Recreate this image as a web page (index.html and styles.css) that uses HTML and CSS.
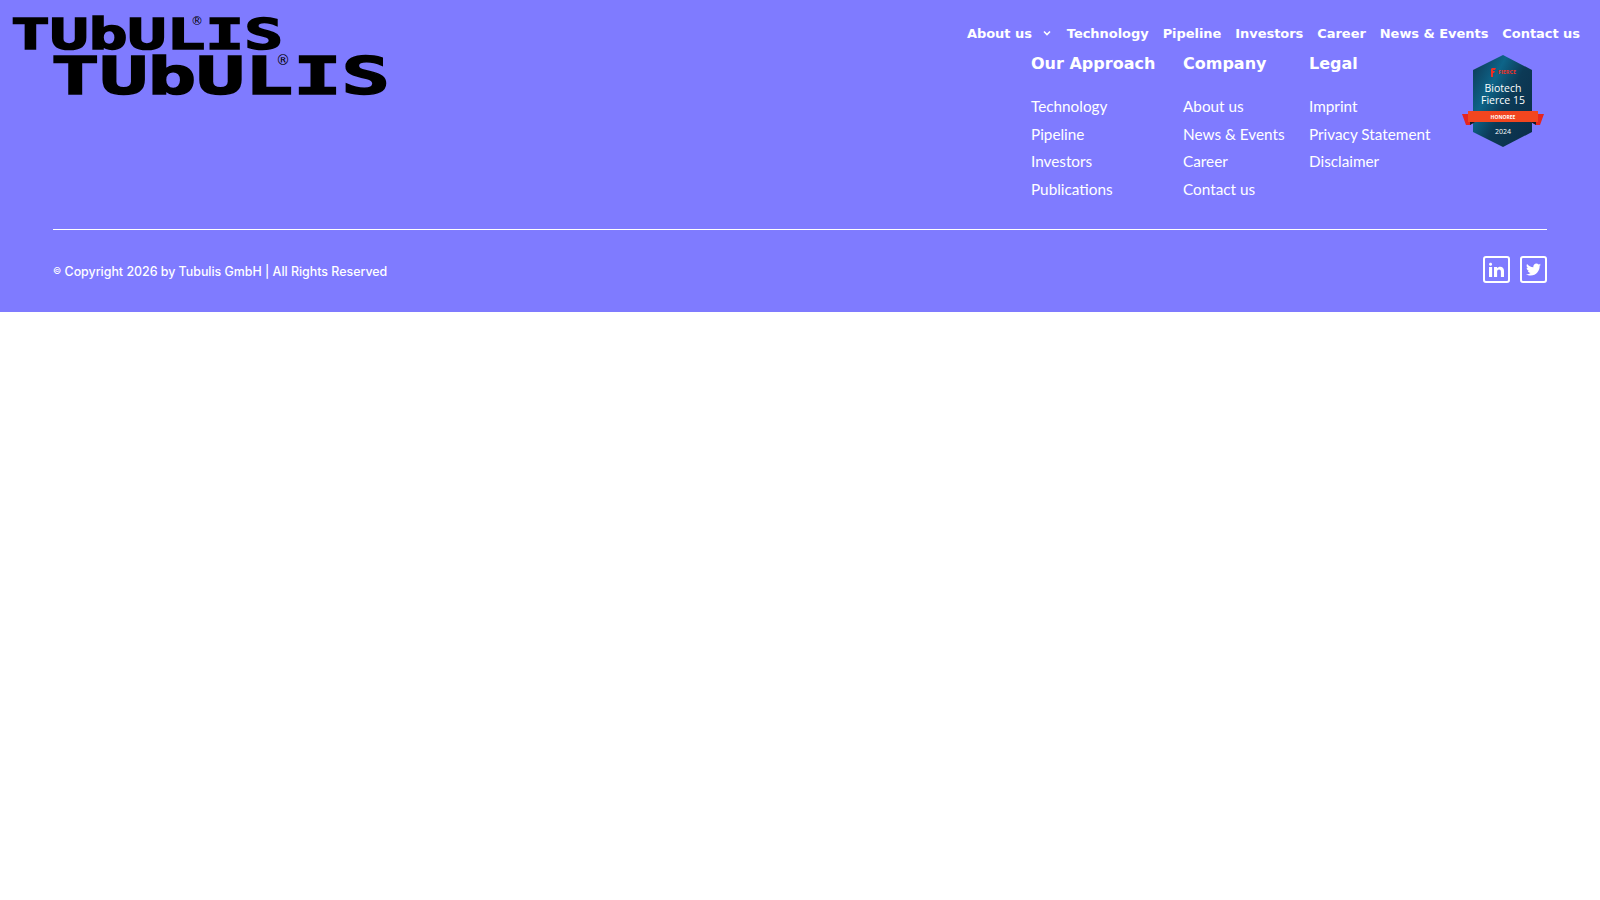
FILE: index.html
```html
<!DOCTYPE html>
<html lang="en">
<head>
  <meta charset="UTF-8">
  <meta name="viewport" content="width=device-width, initial-scale=1.0">
  <title>Tubulis</title>
  <link rel="stylesheet" href="styles.css">
</head>
<body>
  <header class="site-header">
    <a class="logo-small" href="#">
      <svg viewBox="0 0 267 33" width="267" height="33">
        <text class="logo-word" x="-2" y="32.5" font-size="42" textLength="272" lengthAdjust="spacingAndGlyphs">TUbULIS</text>
        <text class="logo-reg" x="178" y="9" font-size="12">®</text>
      </svg>
    </a>
    <nav class="main-nav">
      <a href="#" class="has-sub">About us
        <svg class="chevron" viewBox="0 0 10 10" width="10" height="10"><path d="M2 3.5 5 6.5 8 3.5" fill="none" stroke="#fff" stroke-width="1.6"/></svg>
      </a>
      <a href="#">Technology</a>
      <a href="#">Pipeline</a>
      <a href="#">Investors</a>
      <a href="#">Career</a>
      <a href="#">News &amp; Events</a>
      <a href="#">Contact us</a>
    </nav>
  </header>

  <footer class="site-footer">
    <div class="footer-top">
      <a class="logo-large" href="#">
        <svg viewBox="0 0 334 41" width="334" height="41">
          <text class="logo-word" x="-2" y="39.5" font-size="51" textLength="339" lengthAdjust="spacingAndGlyphs">TUbULIS</text>
          <text class="logo-reg" x="223" y="11" font-size="14">®</text>
        </svg>
      </a>
      <div class="footer-cols">
        <div class="footer-col">
          <h4>Our Approach</h4>
          <a href="#">Technology</a>
          <a href="#">Pipeline</a>
          <a href="#">Investors</a>
          <a href="#">Publications</a>
        </div>
        <div class="footer-col">
          <h4>Company</h4>
          <a href="#">About us</a>
          <a href="#">News &amp; Events</a>
          <a href="#">Career</a>
          <a href="#">Contact us</a>
        </div>
        <div class="footer-col">
          <h4>Legal</h4>
          <a href="#">Imprint</a>
          <a href="#">Privacy Statement</a>
          <a href="#">Disclaimer</a>
        </div>
        <svg class="badge" viewBox="0 0 84 94" width="84" height="94">
          <defs>
            <linearGradient id="badgeFill" x1="0" y1="0" x2="1" y2="0.8">
              <stop offset="0" stop-color="#0f3550"/>
              <stop offset="0.35" stop-color="#0d6488"/>
              <stop offset="0.6" stop-color="#0c3a56"/>
              <stop offset="1" stop-color="#0b2f4a"/>
            </linearGradient>
          </defs>
          <path d="M42 1 71 16V78L42 93 12 78V16Z" fill="url(#badgeFill)"/>
          <path d="M1 60H9V68H14L9 71H5Z M83 60H75V68H70L75 71H79Z" fill="#e5251f"/>
          <path d="M9 68H14L9 71Z M75 68H70L75 71Z" fill="#0a1c2a"/>
          <rect x="7" y="57" width="70" height="11" fill="#f2461f"/>
          <path d="M31 14h4l-1 2h-2v1h2l-1 2h-1v4h-2v-8Z" fill="#ee2f24"/>
          <text class="badge-fierce" x="46" y="20">FIERCE</text>
          <text class="badge-title" x="42" y="38">Biotech</text>
          <text class="badge-title" x="42" y="49.5">Fierce 15</text>
          <text class="badge-honoree" x="42" y="64.5">HONOREE</text>
          <text class="badge-year" x="42" y="80">2024</text>
        </svg>
      </div>
    </div>
    <div class="footer-bottom">
      <p class="copyright"><span class="copy-mark">©</span> Copyright 2026 by Tubulis GmbH | All Rights Reserved</p>
      <div class="social">
        <a href="#" class="social-link">
          <svg viewBox="0 0 24 24" width="15" height="15"><path fill="#fff" d="M4.98 3.5c0 1.381-1.11 2.5-2.48 2.5s-2.48-1.119-2.48-2.5c0-1.38 1.11-2.5 2.48-2.5s2.48 1.12 2.48 2.5zm.02 4.5h-5v16h5v-16zm7.982 0h-4.968v16h4.969v-8.399c0-4.67 6.029-5.052 6.029 0v8.399h4.988v-10.131c0-7.88-8.922-7.593-11.018-3.714v-2.155z"/></svg>
        </a>
        <a href="#" class="social-link">
          <svg viewBox="0 0 24 24" width="15" height="15"><path fill="#fff" d="M24 4.557c-.883.392-1.832.656-2.828.775 1.017-.609 1.798-1.574 2.165-2.724-.951.564-2.005.974-3.127 1.195-.897-.957-2.178-1.555-3.594-1.555-3.179 0-5.515 2.966-4.797 6.045-4.091-.205-7.719-2.165-10.148-5.144-1.29 2.213-.669 5.108 1.523 6.574-.806-.026-1.566-.247-2.229-.616-.054 2.281 1.581 4.415 3.949 4.89-.693.188-1.452.232-2.224.084.626 1.956 2.444 3.379 4.6 3.419-2.07 1.623-4.678 2.348-7.29 2.04 2.179 1.397 4.768 2.212 7.548 2.212 9.142 0 14.307-7.721 14.307-14.807 0-.29-.006-.579-.019-.866.9-.65 1.681-1.461 2.312-2.385z"/></svg>
        </a>
      </div>
    </div>
  </footer>
</body>
</html>
```

FILE: styles.css
```css
body {
  margin: 0;
  background: #fff;
  font-family: "Lato", Arial, sans-serif;
  color: #fff;
}

a {
  color: #fff;
  text-decoration: none;
}

.site-header {
  position: absolute;
  top: 0;
  left: 0;
  right: 0;
  display: flex;
  justify-content: space-between;
  padding: 16px 20px 0 13px;
}

.logo-small,
.logo-large {
  display: block;
  line-height: 0;
}

.logo-small svg,
.logo-large svg {
  overflow: visible;
}

.logo-word {
  font-family: "DejaVu Sans Mono", monospace;
  font-weight: bold;
  fill: #000;
  stroke: #000;
  stroke-width: 1.5;
}

.logo-reg {
  font-family: "DejaVu Sans", sans-serif;
  fill: #000;
}

.main-nav {
  display: flex;
  gap: 14px;
  height: 34px;
  align-items: center;
}

.main-nav a {
  font-family: "DejaVu Sans", sans-serif;
  font-weight: bold;
  font-size: 13px;
  letter-spacing: -0.05px;
}

.has-sub {
  display: flex;
  align-items: center;
  gap: 10px;
}

.chevron {
  margin-right: 1px;
}

.site-footer {
  background: #7f7bff;
  padding: 54px 53px 0;
  height: 258px;
}

.footer-top {
  display: flex;
  justify-content: space-between;
  height: 175px;
  border-bottom: 1px solid #fff;
}

.footer-cols {
  display: grid;
  grid-template-columns: 152px 126px 152px 86px;
  align-items: start;
}

.footer-col h4 {
  margin: 0 0 20px;
  padding-top: 1px;
  font-family: "DejaVu Sans", sans-serif;
  font-weight: bold;
  font-size: 16px;
  line-height: 18px;
}

.footer-col a {
  display: block;
  font-size: 15.3px;
  line-height: 27.5px;
}

.badge text {
  text-anchor: middle;
  fill: #fff;
  font-family: "Open Sans", sans-serif;
}

.badge .badge-fierce {
  font-size: 5.5px;
  font-weight: bold;
  fill: #ee2f24;
}

.badge .badge-title {
  font-size: 10.5px;
}

.badge .badge-honoree {
  font-size: 5px;
  font-weight: bold;
}

.badge .badge-year {
  font-size: 7px;
}

.footer-bottom {
  display: flex;
  justify-content: space-between;
  align-items: center;
  height: 78px;
  padding-bottom: 4px;
}

.copyright {
  margin: 4px 0 0;
  font-family: "Inter", sans-serif;
  font-size: 12.4px;
  font-weight: 500;
}

.copy-mark {
  font-size: 9px;
  vertical-align: 2px;
}

.social {
  display: flex;
  gap: 10px;
}

.social-link {
  display: flex;
  align-items: center;
  justify-content: center;
  width: 23px;
  height: 23px;
  border: 2px solid #fff;
  border-radius: 3px;
}
```
